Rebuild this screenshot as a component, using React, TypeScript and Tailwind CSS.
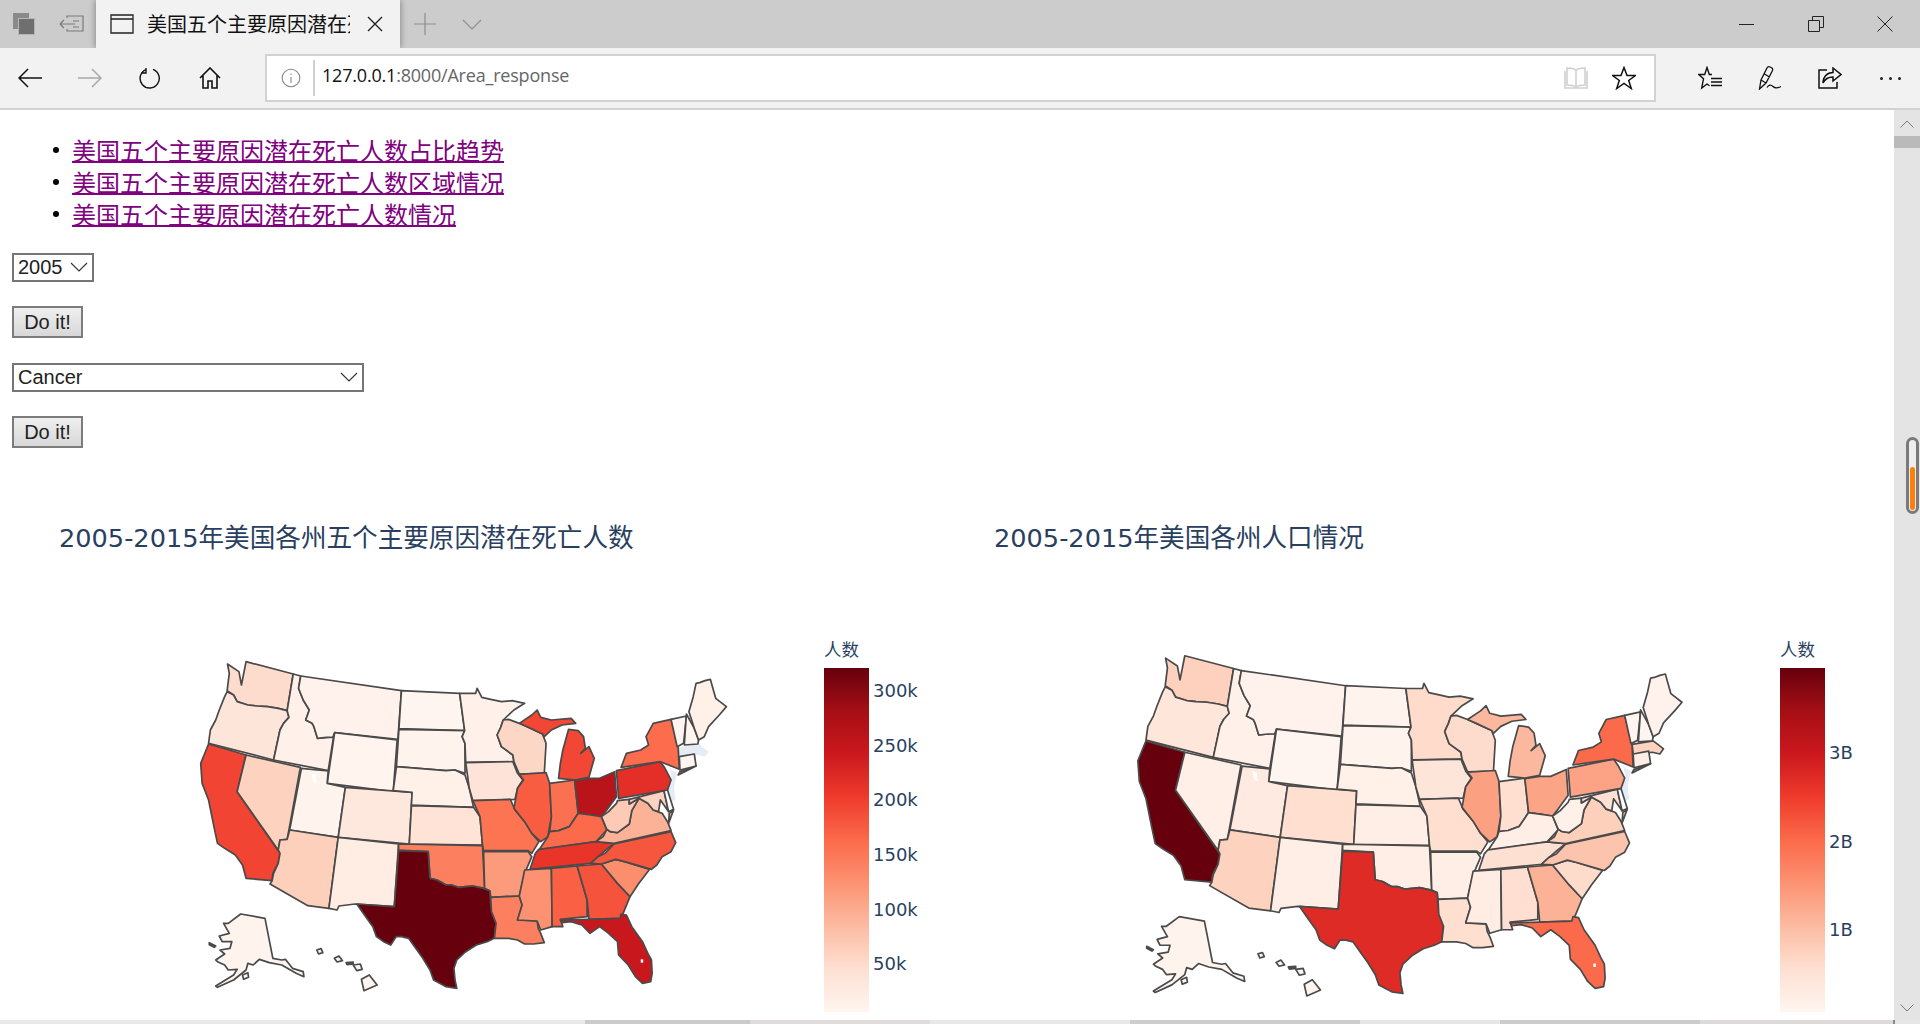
import React from 'react';

// state outlines traced in a 1568x1152 space that maps onto a 560x384 box
const STATES: Record<string, string> = {
  MA: '1395,322 1452,312 1462,320 1480,335 1470,350 1450,345 1398,352',
  NJ: '1372,388 1392,400 1383,440 1387,480 1368,492 1360,450 1378,425',
  WA: '133,72 165,95 172,135 185,65 317,102 300,212 275,205 245,200 215,198 190,195 160,185 150,165 132,152 138,100',
  OR: '132,155 150,165 160,185 190,195 215,198 245,200 275,205 300,212 305,232 290,250 280,270 262,360 80,310 85,270 100,240 110,210 125,170',
  CA: '80,312 185,345 160,455 280,640 275,670 260,700 258,722 185,715 175,675 155,645 125,625 105,610 95,560 80,480 62,430 58,370',
  NV: '185,345 337,382 305,570 300,598 280,600 275,630 160,455',
  ID: '317,102 338,108 332,145 345,180 362,210 352,240 370,250 375,260 385,295 410,292 430,290 415,392 262,360 280,270 290,250 305,232 300,212',
  MT: '338,108 620,152 610,298 433,278 428,292 410,292 385,295 375,260 370,250 352,240 362,210 345,180 332,145',
  WY: '433,278 608,300 597,455 412,430',
  UT: '340,385 415,393 412,430 463,442 443,592 307,570',
  CO: '463,442 650,457 642,612 443,592',
  AZ: '307,570 443,592 417,805 358,797 252,732 258,722 262,700 275,670 280,640 275,630 280,600 300,598',
  NM: '443,592 612,612 600,800 490,792 445,798 440,810 417,805',
  ND: '620,152 783,160 797,272 613,266',
  SD: '613,268 797,272 790,290 798,310 798,400 770,390 745,392 606,380',
  NE: '606,380 745,392 770,390 798,405 810,445 822,502 648,495 650,457 597,452',
  KS: '648,497 822,502 840,530 847,615 642,612',
  OK: '612,612 847,617 853,745 820,738 800,740 780,742 760,735 745,735 720,720 700,715 695,635 612,630',
  TX: '612,632 695,635 700,715 720,720 745,735 760,735 780,742 800,740 820,738 850,745 868,752 870,790 875,820 885,850 880,895 860,905 830,915 800,935 775,960 767,985 770,1020 775,1045 745,1040 710,1020 700,990 680,955 660,925 640,895 620,890 605,890 590,915 570,905 550,890 540,860 520,830 495,792 600,800',
  MN: '783,160 828,160 832,145 845,172 870,178 900,185 930,182 965,190 935,210 905,240 898,262 888,285 900,320 932,345 935,365 800,367 798,310 790,290 797,272',
  IA: '800,368 932,365 945,400 960,420 945,445 938,478 820,482 810,445',
  MO: '820,482 925,478 938,510 965,545 985,580 1005,605 985,640 975,632 850,632 847,615 840,530',
  AR: '850,635 975,635 985,650 965,700 950,768 870,772 868,752 853,745',
  LA: '870,772 950,768 958,795 945,840 1000,843 1003,865 1010,880 1020,908 990,912 965,912 945,900 920,895 880,895 885,850 872,815',
  WI: '905,240 920,238 950,250 975,262 1015,282 1025,310 1020,400 950,402 935,365 932,345 900,320 888,285 898,262',
  IL: '950,403 1025,398 1035,430 1040,530 1030,590 1010,605 985,580 965,545 935,505 945,445 962,420',
  IN: '1035,430 1105,420 1115,520 1090,560 1060,572 1035,575 1040,530',
  MIL: '1060,415 1065,370 1072,330 1088,268 1115,272 1130,290 1135,325 1122,340 1145,320 1160,355 1145,412 1105,420',
  MIU: '950,250 985,225 1000,210 1010,232 1040,240 1095,235 1108,250 1070,255 1040,270 1020,290 1015,282 975,262',
  OH: '1105,422 1145,415 1175,415 1217,395 1222,470 1195,510 1180,530 1150,525 1115,520',
  KY: '1115,520 1150,525 1180,530 1195,570 1165,605 1035,625 1005,630 1030,590 1035,575 1060,572 1090,560',
  TN: '1005,628 1165,605 1215,610 1190,632 1150,670 980,688 995,640',
  MS: '965,690 1040,685 1042,860 1010,870 1000,843 945,840 958,795 950,768',
  AL: '1040,685 1112,678 1140,780 1140,830 1065,838 1072,860 1042,860',
  GA: '1112,678 1180,672 1225,730 1260,770 1235,835 1145,838 1140,780',
  FL: '1065,840 1145,838 1232,835 1235,822 1250,825 1265,860 1295,905 1310,940 1320,960 1322,1000 1318,1025 1295,1030 1275,1010 1255,975 1228,945 1225,905 1200,880 1175,860 1148,880 1125,855 1095,845 1070,848',
  SC: '1180,672 1220,658 1245,665 1315,688 1285,730 1260,770 1225,730',
  NC: '1150,670 1170,650 1190,640 1215,612 1375,575 1388,608 1375,635 1350,650 1335,675 1320,688 1245,665 1220,658 1180,672',
  VA: '1165,605 1185,590 1195,568 1205,575 1225,578 1258,552 1265,512 1285,475 1310,490 1325,510 1350,520 1365,545 1375,572 1215,610',
  WV: '1180,530 1200,515 1222,490 1225,482 1258,478 1258,492 1285,475 1265,512 1258,552 1225,578 1205,575 1195,568',
  MD: '1258,478 1355,452 1368,515 1355,495 1345,480 1340,515 1325,510 1310,490 1285,475 1258,492',
  DE: '1355,452 1365,450 1382,508 1368,515',
  VS: '1370,520 1382,510 1368,550',
  PA: '1222,392 1345,365 1358,385 1375,420 1365,450 1228,475',
  NY: '1235,382 1250,340 1290,330 1312,315 1305,290 1325,250 1375,238 1395,325 1398,388 1345,365',
  LI: '1395,405 1445,378 1400,395',
  CT: '1398,350 1440,342 1445,378 1400,390',
  VT: '1375,238 1418,228 1410,310 1392,320',
  NH: '1418,222 1440,265 1452,300 1450,312 1412,315',
  ME: '1425,215 1437,170 1445,130 1455,128 1470,122 1485,118 1492,145 1500,175 1530,200 1510,225 1480,260 1468,290 1452,300 1440,265',
  AK: '135,850 170,822 238,835 260,955 285,960 295,958 315,985 345,995 347,1010 325,1000 285,975 250,968 222,958 205,975 190,970 185,990 150,1020 105,1042 100,1038 150,1005 160,988 135,990 125,975 105,965 100,960 125,942 112,930 140,925 145,905 118,905 110,888 138,880 122,850',
  AK2: '175,1005 190,998 192,1012 178,1018',
  AK3: '82,908 100,918 96,922 82,914',
  HI1: '383,930 395,926 400,938 388,942',
  HI2: '432,955 445,948 455,962 440,966',
  HI3: '465,968 485,966 485,972 468,974',
  HI4: '485,975 505,972 510,988 495,992',
  HI5: '508,1018 530,1005 552,1035 515,1052',
};

const MAP_ONE: Record<string, string> = {
  MA: '#e5ecf6', NJ: '#e5ecf6', WA: '#fedccd', OR: '#fee5d9', CA: '#f14432', NV: '#fdd3c0', ID: '#fff1ea', MT: '#fff2ec',
  WY: '#fff4ee', UT: '#fff3ed', CO: '#fee7dc', AZ: '#fdd0bc', NM: '#ffece3', ND: '#fff5f0', SD: '#fff3ed', NE: '#fff0e8',
  KS: '#fee3d6', OK: '#fc8060', TX: '#67000d', MN: '#fff0e9', IA: '#fee4d8', MO: '#fc7452', AR: '#fc9b7c', LA: '#fc7f5f',
  WI: '#fdd7c6', IL: '#f85d42', IN: '#fb7050', MIL: '#f24734', MIU: '#f24734', OH: '#b81419', KY: '#fb6a4a', TN: '#e9342a',
  MS: '#fc9272', AL: '#f96044', GA: '#f5533b', FL: '#c9181d', SC: '#fc8d6d', NC: '#f6563d', VA: '#fcb296', WV: '#fdcab5',
  MD: '#fdd4c2', DE: '#ffffff', VS: '#fcb296', PA: '#e32f27', NY: '#fc6c4d', LI: '#fc6c4d', CT: '#fff5f0', VT: '#fff5f0', NH: '#fff5f0',
  ME: '#fff0e8', AK: '#fff3ed', AK2: '#fff3ed', AK3: '#555555', HI1: '#fff5f0', HI2: '#fff5f0', HI3: '#555555', HI4: '#fff5f0', HI5: '#fff5f0',
};

const MAP_TWO: Record<string, string> = {
  ...MAP_ONE,
  MA: '#fdd3c0', WA: '#fdd1be', OR: '#fee6da', CA: '#67000d', NV: '#ffefe7', UT: '#feeae0', CO: '#fedfd0', AZ: '#fdd3c0',
  NM: '#ffeee6', WY: '#fff5f0', ND: '#fff3ed', KS: '#ffeee5', OK: '#ffeee5', TX: '#de2b25', MN: '#fedbcb', IA: '#fee5d9',
  MO: '#fedfd0', AR: '#ffeee5', LA: '#fedfd0', WI: '#fedccd', IL: '#fca082', IN: '#fedfd0', MIL: '#fcb89e', MIU: '#fcb89e',
  OH: '#fca486', KY: '#ffeee5', TN: '#fee0d2', MS: '#ffece3', AL: '#fedfd1', GA: '#fcb296', FL: '#fb6a4a', SC: '#fedccc',
  NC: '#fdc4ad', VA: '#fdd0bc', VS: '#fdd0bc', WV: '#fff0e9', MD: '#fee1d4', PA: '#fca385', NY: '#fb6b4b', LI: '#fb6b4b', CT: '#ffeee6', ME: '#fff2ec',
};

function UsaMap({ fills, transform }: { fills: Record<string, string>; transform?: string }) {
  return (
    <svg viewBox="0 0 1568 1152" preserveAspectRatio="none" className="h-[384px] w-[560px] shrink-0 overflow-visible">
      <g transform={transform}>
        {Object.entries(STATES).map(([id, points]) => (
          <polygon
            key={id}
            points={points}
            fill={fills[id]}
            stroke={fills[id] === '#e5ecf6' ? 'none' : '#4a4a4a'}
            strokeWidth={1.7}
            strokeLinejoin="round"
            vectorEffect="non-scaling-stroke"
          />
        ))}
        <polygon points="368,398 380,405 382,430 372,425" fill="#ffffff" />
        <polygon points="1290,958 1297,958 1297,968 1290,968" fill="#ffffff" />
      </g>
    </svg>
  );
}

function Legend({ ticks }: { ticks: { label: string; y: number }[] }) {
  return (
    <div className="w-[100px] shrink-0">
      <div className="mb-[11px] h-[17px] font-['Noto_Sans_CJK_SC',sans-serif] text-[17.5px] leading-[18px] text-[#2a3f5f]">人数</div>
      <div className="relative h-[344px] w-[45px] bg-[linear-gradient(to_top,#fff5f0_0%,#fee0d2_12.5%,#fcbba1_25%,#fc9272_37.5%,#fb6a4a_50%,#ef3b2c_62.5%,#cb181d_75%,#a50f15_87.5%,#67000d_100%)]">
        {ticks.map((t) => (
          <span
            key={t.label}
            className="absolute left-[49px] font-['DejaVu_Sans',sans-serif] text-[18px] leading-[20px] whitespace-nowrap text-[#2a3f5f]"
            style={{ top: t.y - 668 - 10 }}
          >
            {t.label}
          </span>
        ))}
      </div>
    </div>
  );
}

function Chart({ title, children, className }: { title: string; children: React.ReactNode; className: string }) {
  return (
    <div className={className}>
      <h2 className="h-[36px] pl-[59px] font-['DejaVu_Sans','Noto_Sans_CJK_SC',sans-serif] text-[25.6px] leading-[36px] font-normal whitespace-nowrap text-[#2a3f5f]">
        {title}
      </h2>
      <div className="mt-[84px] flex items-start">{children}</div>
    </div>
  );
}

function FormSelect({ value, widthClass }: { value: string; widthClass: string }) {
  return (
    <div className={`relative h-[29px] ${widthClass}`}>
      <select
        defaultValue={value}
        className="h-full w-full appearance-none rounded-none border-2 border-[#767676] bg-white px-[4px] font-['Liberation_Sans',sans-serif] text-[20px] leading-[25px] text-[#222] outline-none"
      >
        <option>{value}</option>
      </select>
      <svg viewBox="0 0 18 10" className="pointer-events-none absolute top-[9px] right-[6px] h-[10px] w-[18px]" fill="none" stroke="#333" strokeWidth="1.1">
        <path d="M1 1l8 8 8-8" />
      </svg>
    </div>
  );
}

function DoIt() {
  return (
    <button className="block h-[32px] w-[71px] border-2 border-[#7c7c7c] bg-[linear-gradient(to_bottom,#efefef,#d8d8d8)] font-['Liberation_Sans',sans-serif] text-[20px] leading-[26px] text-[#222]">
      Do it!
    </button>
  );
}

const LINKS = ['美国五个主要原因潜在死亡人数占比趋势', '美国五个主要原因潜在死亡人数区域情况', '美国五个主要原因潜在死亡人数情况'];

function TabStrip() {
  return (
    <div className="flex h-[48px] bg-[#cccccc]">
      <div className="flex w-[48px] items-center justify-center">
        <svg viewBox="0 0 22 22" className="h-[22px] w-[22px]">
          <rect x="0" y="0" width="16" height="16" fill="#8a8a8a" />
          <rect x="5.500" y="5.500" width="16" height="16" fill="#6f6f6f" stroke="#b5b5b5" />
        </svg>
      </div>
      <div className="flex w-[48px] items-center justify-center">
        <svg viewBox="0 0 26 18" className="h-[18px] w-[26px]" fill="none" stroke="#7a7a7a" strokeWidth="1.2">
          <path d="M8 3V1h16v15H8v-2M1 9h15M1 9l4-4M1 9l4 4M14 6h6M14 12h6" />
        </svg>
      </div>
      <div className="relative flex w-[304px] items-center bg-[#f2f2f2] pl-[14px] shadow-[0_0_7px_rgba(0,0,0,0.4)]">
        <svg viewBox="0 0 24 20" className="h-[20px] w-[24px] shrink-0" fill="none" stroke="#222" strokeWidth="1.3">
          <path d="M1 1h22v18H1zM1 5h22" />
        </svg>
        <span className="ml-[13px] w-[203px] overflow-hidden font-['Noto_Sans_CJK_SC',sans-serif] text-[20px] whitespace-nowrap text-[#111]">
          美国五个主要原因潜在死亡人数区域情况
        </span>
        <svg viewBox="0 0 16 16" className="ml-[17px] h-[16px] w-[16px]" fill="none" stroke="#222" strokeWidth="1.4">
          <path d="M1 1l14 14M15 1L1 15" />
        </svg>
      </div>
      <div className="flex w-[50px] items-center justify-center">
        <svg viewBox="0 0 22 22" className="h-[22px] w-[22px]" fill="none" stroke="#8c8c8c" strokeWidth="1.2">
          <path d="M11 0v22M0 11h22" />
        </svg>
      </div>
      <div className="flex w-[44px] items-center justify-center">
        <svg viewBox="0 0 20 11" className="h-[11px] w-[20px]" fill="none" stroke="#8c8c8c" strokeWidth="1.1">
          <path d="M1 1l9 9 9-9" />
        </svg>
      </div>
      <div className="mr-[1px] ml-auto flex">
        <div className="flex w-[69px] items-center justify-center">
          <div className="h-px w-[15px] bg-[#222]" />
        </div>
        <div className="flex w-[69px] items-center justify-center">
          <svg viewBox="0 0 16 16" className="h-[16px] w-[16px]" fill="none" stroke="#222">
            <path d="M.5 4.500h11v11H.5zM4.500 4V.5h11v11H12" />
          </svg>
        </div>
        <div className="flex w-[69px] items-center justify-center">
          <svg viewBox="0 0 16 16" className="h-[16px] w-[16px]" fill="none" stroke="#222">
            <path d="M.5.5l15 15M15.500.5l-15 15" />
          </svg>
        </div>
      </div>
    </div>
  );
}

function NavButton({ children }: { children: React.ReactNode }) {
  return <div className="flex h-[60px] w-[60px] items-center justify-center">{children}</div>;
}

function Toolbar() {
  return (
    <div className="relative flex h-[62px] items-start border-b-2 border-[#d2d2d2] bg-[#f2f2f2]">
      <NavButton>
        <svg viewBox="0 0 24 20" className="h-[20px] w-[24px]" fill="none" stroke="#111" strokeWidth="1.5">
          <path d="M24 10H1M10 1l-9 9 9 9" />
        </svg>
      </NavButton>
      <NavButton>
        <svg viewBox="0 0 24 20" className="h-[20px] w-[24px]" fill="none" stroke="#a8a8a8" strokeWidth="1.5">
          <path d="M0 10h23M14 1l9 9-9 9" />
        </svg>
      </NavButton>
      <NavButton>
        <svg viewBox="0 0 22 22" className="h-[22px] w-[22px]" fill="none" stroke="#111" strokeWidth="1.4">
          <path d="M14 2.400A9.600 9.600 0 1 1 6.400 2.800M7 1v5H2" />
        </svg>
      </NavButton>
      <NavButton>
        <svg viewBox="0 0 22 22" className="h-[22px] w-[22px]" fill="none" stroke="#111" strokeWidth="1.6">
          <path d="M1 11L11 1l10 10M4 8.500V21h5v-7h4v7h5V8.500" />
        </svg>
      </NavButton>
      <div className="mt-[6px] ml-[25px] flex h-[48px] w-[1391px] items-center border-2 border-[#d2d2d2] bg-white">
        <svg viewBox="0 0 20 20" className="ml-[14px] h-[20px] w-[20px]" fill="none" stroke="#888" strokeWidth="1.1">
          <circle cx="10" cy="10" r="8.800" />
          <path d="M10 9v6M10 5.500v1.400" />
        </svg>
        <div className="ml-[12px] h-[36px] w-[2px] bg-[#cfcfcf]" />
        <div className="ml-[7px] -translate-y-[3px] font-['Open_Sans',sans-serif] text-[18px] tracking-[-0.2px] text-[#666]">
          <span className="text-[#111]">127.0.0.1</span>:8000/Area_response
        </div>
        <svg viewBox="0 0 24 22" className="mr-[24px] ml-auto h-[22px] w-[24px]" fill="none" stroke="#d0d0d0" strokeWidth="1.600">
          <path d="M12 3C10 1.500 6 1 3 1v17c3 0 7 .5 9 2 2-1.500 6-2 9-2V1c-3 0-7 .5-9 2zM12 3v17M1 4v17h22V4" />
        </svg>
        <svg viewBox="0 0 24 24" className="mr-[18px] h-[24px] w-[24px]" fill="none" stroke="#111" strokeWidth="1.500">
          <path d="M12 1.500l3 8h8.500l-6.800 5 2.600 8L12 17.500l-7.300 5 2.600-8-6.800-5H9z" />
        </svg>
      </div>
      <div className="ml-[24px] flex">
        <NavButton>
          <svg viewBox="0 0 24 24" className="h-[24px] w-[24px]" fill="none" stroke="#111" strokeWidth="1.400">
            <path d="M14 8.500h-2.700L9 1.500 6.700 8.500H.8l4.700 4.300L3.700 22 9 18l2.500 1.800M13 12.500h11M13 16h11M13 19.500h11" />
          </svg>
        </NavButton>
        <NavButton>
          <svg viewBox="0 0 24 24" className="h-[24px] w-[24px]" fill="none" stroke="#111" strokeWidth="1.300">
            <path d="M1.500 23L3 14 9 2q1-2 3-1l2 1q1 1 .5 2.500L8 17zM3 14l5 3M6.500 8l5 3M9 21.500c2-3 4-3 6-1s4 2 8 0" />
          </svg>
        </NavButton>
        <NavButton>
          <svg viewBox="0 0 24 22" className="h-[22px] w-[24px]" fill="none" stroke="#111" strokeWidth="1.500">
            <path d="M9 3H1v18h18v-6M15 1l8 6.500-8 6.500v-4c-5 0-8 2-10 6 0-6 4-10.500 10-10.500z" />
          </svg>
        </NavButton>
        <NavButton>
          <div className="flex gap-[6px]">
            <div className="h-[3px] w-[3px] rounded-full bg-[#222]" />
            <div className="h-[3px] w-[3px] rounded-full bg-[#222]" />
            <div className="h-[3px] w-[3px] rounded-full bg-[#222]" />
          </div>
        </NavButton>
      </div>
    </div>
  );
}

function ScrollRail() {
  return (
    <div className="relative flex w-[26px] shrink-0 flex-col items-center bg-[#e4e4e4]">
      <svg viewBox="0 0 14 8" className="mt-[10px] h-[8px] w-[14px]" fill="none" stroke="#7a7a7a">
        <path d="M.5 7.500L7 1l6.500 6.500" />
      </svg>
      <div className="mt-[8px] h-[12px] w-full bg-[#bababa]" />
      <div className="absolute top-[327px] left-[12px] h-[77px] w-[13px] rounded-full border-[3px] border-[#7a7a7a] bg-[#eeeeee]">
        <div className="absolute top-[27px] left-[1px] h-[43px] w-[5px] rounded-full bg-[#ff7f0e]" />
      </div>
      <svg viewBox="0 0 14 8" className="mt-auto mb-[8px] h-[8px] w-[14px]" fill="none" stroke="#7a7a7a">
        <path d="M.5.5L7 7l6.500-6.500" />
      </svg>
    </div>
  );
}

export default function App() {
  return (
    <div className="flex h-[1024px] w-[1920px] flex-col overflow-hidden bg-white">
      <TabStrip />
      <Toolbar />

      <div className="flex h-[910px]">
        <div className="w-[1894px] overflow-hidden">
          <ul className="mt-[24px] pl-[53px] font-['Noto_Sans_CJK_SC',sans-serif] text-[24px] leading-[32px]">
            {LINKS.map((link) => (
              <li key={link} className="flex items-center gap-[13px]">
                <span className="h-[6px] w-[6px] shrink-0 rounded-full bg-black" />
                <a href="#" className="text-[#800080] underline decoration-2 underline-offset-[1px]">
                  {link}
                </a>
              </li>
            ))}
          </ul>

          {/* Forms */}
          <div className="mt-[23px] ml-[12px]">
            <FormSelect value="2005" widthClass="w-[82px]" />
            <div className="mt-[24px]">
              <DoIt />
            </div>
            <div className="mt-[25px]">
              <FormSelect value="Cancer" widthClass="w-[352px]" />
            </div>
            <div className="mt-[24px]">
              <DoIt />
            </div>
          </div>

          {/* Charts */}
          <div className="mt-[72px] flex">
            <Chart title="2005-2015年美国各州五个主要原因潜在死亡人数" className="w-[935px] shrink-0">
              <div className="ml-[180px] flex">
                <UsaMap fills={MAP_ONE} />
                <div className="ml-[84px]">
                  <Legend
                    ticks={[
                      { label: '300k', y: 691 },
                      { label: '250k', y: 746 },
                      { label: '200k', y: 800 },
                      { label: '150k', y: 855 },
                      { label: '100k', y: 910 },
                      { label: '50k', y: 964 },
                    ]}
                  />
                </div>
              </div>
            </Chart>
            <Chart title="2005-2015年美国各州人口情况" className="w-[959px] shrink-0">
              <div className="ml-[185px] flex">
                <UsaMap fills={MAP_TWO} transform="translate(-10 -20) scale(1.035 1.034)" />
                <div className="ml-[100px]">
                  <Legend
                    ticks={[
                      { label: '3B', y: 753 },
                      { label: '2B', y: 842 },
                      { label: '1B', y: 930 },
                    ]}
                  />
                </div>
              </div>
            </Chart>
          </div>
        </div>
        <ScrollRail />
      </div>

      {/* Horizontal scroll strip */}
      <div className="flex h-[4px] bg-[#e6e6e6]">
        <div className="w-[585px] bg-[#e9e9e9]" />
        <div className="w-[165px] bg-[#cbcbcb]" />
        <div className="w-[180px] bg-[#e0dcdc]" />
        <div className="w-[200px] bg-[#e8e8e8]" />
        <div className="w-[230px] bg-[#cdcdcd]" />
        <div className="w-[140px] bg-[#e6e6e6]" />
        <div className="w-[200px] bg-[#cccccc]" />
        <div className="w-[193px] bg-[#dedada]" />
        <div className="w-[2px] bg-[#8a8a8a]" />
      </div>
    </div>
  );
}
